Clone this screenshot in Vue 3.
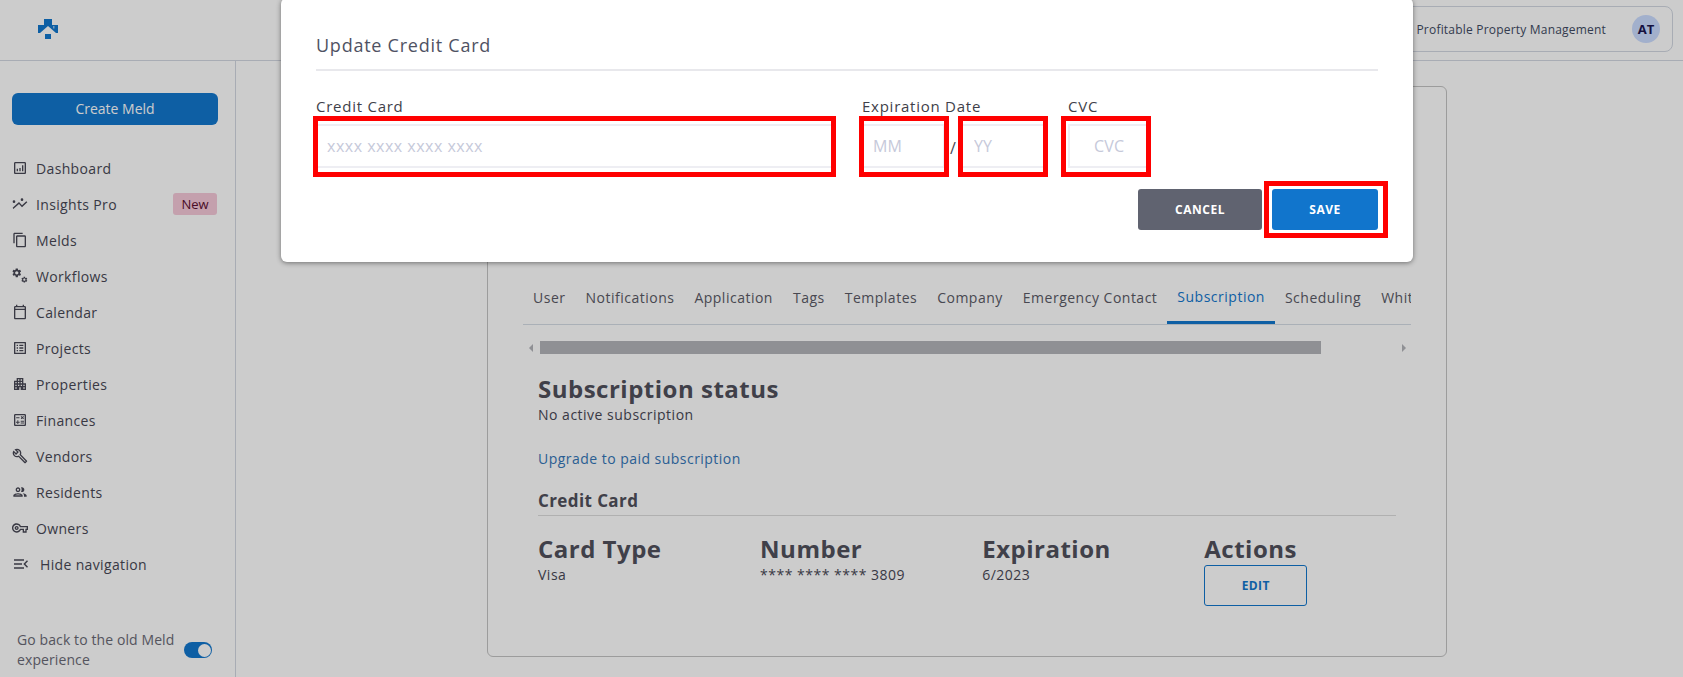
<script setup>
const nav = [
  { label: 'Dashboard', d: 'M19 3H5c-1.100 0-2 .9-2 2v14c0 1.100.9 2 2 2h14c1.100 0 2-.9 2-2V5c0-1.100-.9-2-2-2zm0 16H5V5h14v14zM7 13h2v4H7zm4-1h2v5h-2zm4-4h2v9h-2z' },
  { label: 'Insights Pro', d: 'M1 17.500l9.500-8.500 4.500 5 6.500-6 1.500 1.500-8 7.500-4.500-5-8.500 7.500zM3 6.500a2 2 0 1 1 0 4 2 2 0 0 1 0-4zM15 3.500a2 2 0 1 1 0 4 2 2 0 0 1 0-4z', badge: 'New' },
  { label: 'Melds', d: 'M16 1H4c-1.100 0-2 .9-2 2v14h2V3h12V1zm3 4H8c-1.100 0-2 .9-2 2v14c0 1.100.9 2 2 2h11c1.100 0 2-.9 2-2V7c0-1.100-.9-2-2-2zm0 16H8V7h11v14z' },
  { label: 'Workflows', gears: true },
  { label: 'Calendar', d: 'M19 3h-1V1h-2v2H8V1H6v2H5c-1.100 0-2 .9-2 2v16c0 1.100.9 2 2 2h14c1.100 0 2-.9 2-2V5c0-1.100-.9-2-2-2zm0 18H5V9h14v12zM5 7V5h14v2H5z' },
  { label: 'Projects', d: 'M19 5v14H5V5h14m1.100-2H3.900c-.5 0-.9.4-.9.9v16.200c0 .4.4.9.9.9h16.200c.4 0 .9-.5.9-.9V3.900c0-.5-.5-.9-.9-.9zM11 7h6v2h-6V7zm0 4h6v2h-6v-2zm0 4h6v2h-6zM7 7h2v2H7zm0 4h2v2H7zm0 4h2v2H7z' },
  { label: 'Properties', d: 'M17 11V3H7v4H3v14h8v-4h2v4h8V11h-4zM7 19H5v-2h2v2zm0-4H5v-2h2v2zm0-4H5V9h2v2zm4 4H9v-2h2v2zm0-4H9V9h2v2zm0-4H9V5h2v2zm4 8h-2v-2h2v2zm0-4h-2V9h2v2zm0-4h-2V5h2v2zm4 12h-2v-2h2v2zm0-4h-2v-2h2v2z' },
  { label: 'Finances', d: 'M19 3H5c-1.100 0-2 .9-2 2v14c0 1.100.9 2 2 2h14c1.100 0 2-.9 2-2V5c0-1.100-.9-2-2-2zm0 16H5V5h14v14zM6.250 7.720h5v1.500h-5zM13 15.750h5v1.500h-5zm0-2.500h5v1.500h-5zM8 18h1.500v-2h2v-1.500h-2v-2H8v2H6V16h2zm6.090-7.050l1.410-1.410 1.410 1.410 1.060-1.060-1.410-1.420 1.410-1.410L16.910 6 15.500 7.410 14.090 6l-1.060 1.060 1.410 1.410-1.410 1.420z' },
  { label: 'Vendors', d: 'M22.610 18.990l-9.080-9.080c.93-2.340.45-5.100-1.440-7C9.790.61 6.210.4 3.660 2.260L7.500 6.110 6.080 7.520 2.250 3.690C.39 6.230.6 9.820 2.900 12.110c1.860 1.860 4.570 2.350 6.890 1.480l9.110 9.110c.39.39 1.020.39 1.410 0l2.300-2.300c.4-.38.4-1.010 0-1.410zm-3 1.600l-9.460-9.460c-.61.45-1.290.72-2 .82-1.360.2-2.790-.21-3.830-1.250C3.370 9.760 2.930 8.500 3 7.260l3.090 3.090 4.240-4.240-3.090-3.090c1.240-.07 2.490.37 3.440 1.310 1.080 1.080 1.490 2.570 1.240 3.960-.12.71-.42 1.370-.88 1.960l9.450 9.450-.88.88z' },
  { label: 'Residents', d: 'M9 13.750c-2.340 0-7 1.170-7 3.500V19h14v-1.750c0-2.330-4.660-3.500-7-3.500zM4.340 17c.84-.58 2.870-1.250 4.660-1.250s3.820.67 4.660 1.250H4.340zM9 12c1.930 0 3.500-1.570 3.500-3.500S10.930 5 9 5 5.500 6.570 5.500 8.500 7.070 12 9 12zm0-5c.83 0 1.500.67 1.500 1.500S9.830 10 9 10s-1.500-.67-1.500-1.500S8.170 7 9 7zm7.040 6.810c1.160.84 1.960 1.960 1.960 3.440V19h4v-1.750c0-2.020-3.500-3.170-5.960-3.440zM15 12c1.930 0 3.500-1.570 3.500-3.500S16.930 5 15 5c-.54 0-1.040.13-1.500.35.63.89 1 1.980 1 3.150s-.37 2.260-1 3.150c.46.22.96.35 1.500.35z' },
  { label: 'Owners', d: 'M22 19h-6v-4h-2.680c-1.140 2.420-3.600 4-6.320 4-3.860 0-7-3.140-7-7s3.140-7 7-7c2.720 0 5.170 1.580 6.320 4H24v6h-2v4zm-4-2h2v-4h2v-2H11.940l-.23-.67C11.010 8.340 9.110 7 7 7c-2.760 0-5 2.240-5 5s2.240 5 5 5c2.110 0 4.010-1.340 4.710-3.330l.23-.67H18v4zM7 15c-1.650 0-3-1.350-3-3s1.350-3 3-3 3 1.350 3 3-1.350 3-3 3zm0-4c-.55 0-1 .45-1 1s.45 1 1 1 1-.45 1-1-.45-1-1-1z' },
]
const gear = 'M19.140 12.940c.04-.3.06-.61.06-.94 0-.32-.02-.64-.07-.94l2.030-1.580c.18-.14.23-.41.12-.61l-1.920-3.320c-.12-.22-.37-.29-.59-.22l-2.390.96c-.5-.38-1.030-.7-1.620-.94l-.36-2.540c-.04-.24-.24-.41-.48-.41h-3.840c-.24 0-.43.17-.47.41l-.36 2.540c-.59.24-1.130.57-1.620.94l-2.390-.96c-.22-.08-.47 0-.59.22L2.740 8.870c-.12.21-.08.47.12.61l2.030 1.580c-.05.3-.09.63-.09.94s.02.64.07.94l-2.030 1.580c-.18.14-.23.41-.12.61l1.920 3.320c.12.22.37.29.59.22l2.390-.96c.5.38 1.030.7 1.620.94l.36 2.540c.05.24.24.41.48.41h3.840c.24 0 .44-.17.47-.41l.36-2.540c.59-.24 1.130-.56 1.620-.94l2.390.96c.22.08.47 0 .59-.22l1.920-3.320c.12-.22.07-.47-.12-.61l-2.010-1.580zM12 15.600c-1.980 0-3.600-1.620-3.600-3.600s1.620-3.600 3.600-3.600 3.600 1.620 3.600 3.600-1.620 3.600-3.600 3.600z'
const tabs = ['User', 'Notifications', 'Application', 'Tags', 'Templates', 'Company', 'Emergency Contact', 'Subscription', 'Scheduling', 'White Label']
const cols = [
  { head: 'Card Type', val: 'Visa' },
  { head: 'Number', val: '**** **** **** 3809' },
  { head: 'Expiration', val: '6/2023' },
  { head: 'Actions', edit: true },
]
</script>

<template>
  <div class="app">
    <header class="topbar">
      <div class="logo">
        <svg width="22" height="21" viewBox="0 0 22 21">
          <path fill="#1277ce" d="M7 0h8v6h6v8h-2l-8-7-8 7H1V6h6z" />
          <rect fill="#fff" opacity=".55" x="16" y="7" width="1.500" height="2.500" />
          <rect fill="#1277ce" x="8" y="15" width="6" height="5" />
        </svg>
      </div>
      <div class="user">
        <span class="org">Profitable Property Management</span>
        <span class="avatar">AT</span>
      </div>
    </header>

    <div class="body">
      <aside class="sidebar">
        <button class="create">Create Meld</button>
        <nav class="nav">
          <a v-for="item in nav" :key="item.label" class="nav-item">
            <svg class="nav-icon" viewBox="0 0 24 24">
              <template v-if="item.gears">
                <path :d="gear" fill-rule="evenodd" transform="translate(-1 -1) scale(.68)" />
                <path :d="gear" fill-rule="evenodd" transform="translate(13 12) scale(.46)" />
              </template>
              <path v-else :d="item.d" />
            </svg>
            <span>{{ item.label }}</span>
            <span v-if="item.badge" class="badge">{{ item.badge }}</span>
          </a>
          <a class="nav-item hide">
            <svg class="nav-icon" viewBox="0 0 24 24">
              <path d="M3 5h15v2H3zm0 6h12v2H3zm0 6h15v2H3zM24 8l-4 4 4 4-1.500 1.500L17 12l5.500-5.500z" />
            </svg>
            <span>Hide navigation</span>
          </a>
        </nav>
        <div class="old">
          <span class="old-text">Go back to the old Meld experience</span>
          <span class="switch"><i></i></span>
        </div>
      </aside>

      <main class="main">
        <section class="card">
          <div class="tabs">
            <a v-for="t in tabs" :key="t" class="tab" :class="{ active: t === 'Subscription' }">{{ t }}</a>
          </div>
          <div class="scrollbar">
            <i class="arrow left"></i>
            <span class="thumb"></span>
            <i class="arrow right"></i>
          </div>
          <div class="content">
            <h2 class="h">Subscription status</h2>
            <p class="txt">No active subscription</p>
            <a class="link">Upgrade to paid subscription</a>
            <h3 class="sub">Credit Card</h3>
            <div class="cols">
              <div v-for="c in cols" :key="c.head" class="col">
                <h2 class="h">{{ c.head }}</h2>
                <p v-if="c.val" class="txt">{{ c.val }}</p>
                <button v-if="c.edit" class="edit">EDIT</button>
              </div>
            </div>
          </div>
        </section>
      </main>
    </div>

    <div class="overlay"></div>

    <div class="modal">
      <h2 class="modal-title">Update Credit Card</h2>
      <div class="form">
        <div class="field cc">
          <label>Credit Card</label>
          <input placeholder="xxxx xxxx xxxx xxxx" />
        </div>
        <div class="field exp">
          <label>Expiration Date</label>
          <div class="exp-row">
            <input class="mm" placeholder="MM" />
            <span class="slash">/</span>
            <input class="yy" placeholder="YY" />
          </div>
        </div>
        <div class="field cvc">
          <label>CVC</label>
          <input placeholder="CVC" />
        </div>
      </div>
      <div class="actions">
        <button class="btn cancel">CANCEL</button>
        <button class="btn save">SAVE</button>
      </div>
      <i class="mark m-cc"></i>
      <i class="mark m-mm"></i>
      <i class="mark m-yy"></i>
      <i class="mark m-cvc"></i>
      <i class="mark m-save"></i>
    </div>
  </div>
</template>

<style>
html, body { margin: 0; padding: 0; background: #fff; }
</style>

<style scoped>
* { box-sizing: border-box; }
.app {
  position: relative;
  width: 1683px;
  height: 677px;
  overflow: hidden;
  background: #fff;
  font-family: "Open Sans", "Noto Sans", sans-serif;
  color: #484855;
  font-size: 14px;
}
.topbar {
  height: 61px;
  display: flex;
  align-items: flex-start;
  justify-content: space-between;
  border-bottom: 1px solid #d2d8e2;
  padding-right: 10px;
}
.logo { margin: 19px 0 0 37px; height: 21px; }
.logo svg { display: block; }
.user {
  margin-top: 6px;
  height: 46px;
  display: flex;
  align-items: center;
  border: 1px solid #d2d8e2;
  border-radius: 8px;
  padding: 0 12px 0 40px;
}
.org { font-size: 12px; letter-spacing: .2px; color: #414b63; margin-right: 26px; }
.avatar {
  width: 28px;
  height: 28px;
  border-radius: 50%;
  background: #cbdcff;
  color: #1b1650;
  font-size: 13px;
  font-weight: 700;
  display: flex;
  align-items: center;
  justify-content: center;
}
.body { display: flex; height: 616px; }
.sidebar {
  width: 236px;
  flex: none;
  border-right: 1px solid #d2d8e2;
  padding: 32px 0 7px;
  display: flex;
  flex-direction: column;
}
.create {
  margin-left: 12px;
  width: 206px;
  height: 32px;
  border: none;
  border-radius: 6px;
  background: #1277ce;
  color: #fff;
  padding: 0 0 2px;
  font: 14px "Open Sans", sans-serif;
}
.nav { margin-top: 25px; display: flex; flex-direction: column; }
.nav-item {
  height: 36px;
  display: flex;
  align-items: center;
  padding-left: 12px;
  font-size: 14px;
  letter-spacing: .35px;
  position: relative;
}
.nav-icon { width: 16px; height: 16px; margin-right: 8px; fill: #484855; flex: none; }
.hide .nav-icon { margin-right: 12px; }
.badge {
  position: absolute;
  left: 173px;
  top: 7px;
  width: 44px;
  height: 22px;
  border-radius: 3px;
  background: #f5c8d9;
  color: #5c0f30;
  font-size: 13px;
  letter-spacing: 0;
  display: flex;
  align-items: center;
  justify-content: center;
}
.old {
  margin-top: auto;
  padding-left: 17px;
  display: flex;
  align-items: center;
}
.old-text { width: 167px; line-height: 20px; color: #6a6a76; letter-spacing: .1px; }
.switch {
  width: 28px;
  height: 16px;
  border-radius: 8px;
  background: #1277ce;
  display: flex;
  align-items: center;
  justify-content: flex-end;
  padding-right: 1px;
}
.switch i { width: 13px; height: 13px; border-radius: 50%; background: #fff; }
.main { flex: 1; padding: 25px 0 0 251px; }
.card {
  width: 960px;
  height: 571px;
  border: 1px solid #c3c3c3;
  border-radius: 6px;
  padding: 197px 0 0 35px;
}
.tabs {
  width: 888px;
  height: 41px;
  display: flex;
  overflow: hidden;
  border-bottom: 1px solid #d5dde5;
  white-space: nowrap;
}
.tab {
  flex: none;
  padding: 4px 10px 0;
  line-height: 20px;
  letter-spacing: .5px;
  color: #5a5a66;
  height: 40px;
}
.tab.active {
  color: #1277ce;
  border-bottom: 3px solid #1277ce;
  padding-top: 3px;
}
.scrollbar {
  width: 888px;
  height: 13px;
  margin-top: 16px;
  position: relative;
  display: flex;
  align-items: center;
}
.thumb { margin-left: 17px; width: 781px; height: 13px; background: #b3b4ba; }
.arrow {
  position: absolute;
  top: 3px;
  width: 0;
  height: 0;
  border-top: 4px solid transparent;
  border-bottom: 4px solid transparent;
}
.arrow.left { left: 6px; border-right: 4px solid #b3b4ba; }
.arrow.right { right: 5px; border-left: 4px solid #b3b4ba; }
.content { padding: 19px 0 0 15px; width: 873px; }
.h { margin: 0; font-size: 24px; line-height: 32px; font-weight: 700; letter-spacing: .5px; color: #50505c; }
.txt { margin: 0; font-size: 14px; line-height: 20px; letter-spacing: .5px; }
.link { display: block; margin-top: 24px; line-height: 20px; color: #3476b8; letter-spacing: .47px; }
.sub {
  margin: 21px 0 0;
  font-size: 17px;
  line-height: 22px;
  font-weight: 700;
  letter-spacing: .4px;
  padding-bottom: 3px;
  border-bottom: 1px solid #dcdcdc;
  width: 858px;
  color: #50505c;
}
.cols { display: flex; margin-top: 17px; }
.col { width: 222.100px; flex: none; }
.edit {
  display: block;
  width: 103px;
  height: 41px;
  border: 1px solid #1277ce;
  border-radius: 3px;
  background: #fff;
  color: #1277ce;
  font: 700 12px "Open Sans", sans-serif;
  letter-spacing: .4px;
}
.overlay { position: absolute; inset: 0; background: rgba(0, 0, 0, .2); }
.modal {
  position: absolute;
  left: 281px;
  top: -2px;
  width: 1132px;
  height: 264px;
  background: #fff;
  border-radius: 6px;
  box-shadow: 0 1px 5px rgba(0, 0, 0, .45);
  padding: 35px 35px 0 35px;
}
.modal-title {
  margin: 0;
  padding-bottom: 12px;
  line-height: 24px;
  font-size: 18px;
  font-weight: 500;
  letter-spacing: .75px;
  color: #4f5263;
  border-bottom: 2px solid #e8e8ec;
}
.form { display: flex; margin-top: 25px; }
.field { display: flex; flex-direction: column; }
.field label {
  line-height: 20px;
  font-size: 15px;
  font-weight: 500;
  letter-spacing: .75px;
  color: #3f3f4a;
  margin-bottom: 8px;
  white-space: nowrap;
}
.field input {
  height: 44px;
  border: 2px solid #eeeef3;
  background: #fff;
  outline: none;
  font: 16px "Open Sans", sans-serif;
  color: #484855;
  padding: 0 9px;
}
.field input::placeholder { color: #c6c9da; opacity: 1; }
.cc { width: 517px; margin-right: 29px; }
.cc input { letter-spacing: .5px; }
.exp { width: 183px; margin-right: 23px; }
.exp-row { display: flex; align-items: center; }
.mm { width: 83px; }
.yy { width: 84px; padding-left: 11px !important; }
.exp-row input { min-width: 0; }
.slash { width: 16px; text-align: center; font-size: 16px; padding-top: 4px; }
.cvc { width: 82px; }
.cvc input { width: 82px; padding-left: 24px; letter-spacing: .2px; }
.actions { display: flex; justify-content: flex-end; gap: 10px; margin-top: 21px; }
.btn {
  height: 41px;
  border: none;
  border-radius: 3px;
  color: #fff;
  font: 700 12px "Open Sans", sans-serif;
  letter-spacing: .5px;
}
.cancel { width: 124px; background: #606370; }
.save { width: 106px; background: #1175cc; }
.mark { position: absolute; border: 5px solid #f00; }
.m-cc { left: 32px; top: 118px; width: 523px; height: 61px; }
.m-mm { left: 578px; top: 118px; width: 90px; height: 61px; }
.m-yy { left: 677px; top: 118px; width: 90px; height: 61px; }
.m-cvc { left: 780px; top: 118px; width: 90px; height: 61px; }
.m-save { left: 983px; top: 183px; width: 124px; height: 57px; }
</style>
